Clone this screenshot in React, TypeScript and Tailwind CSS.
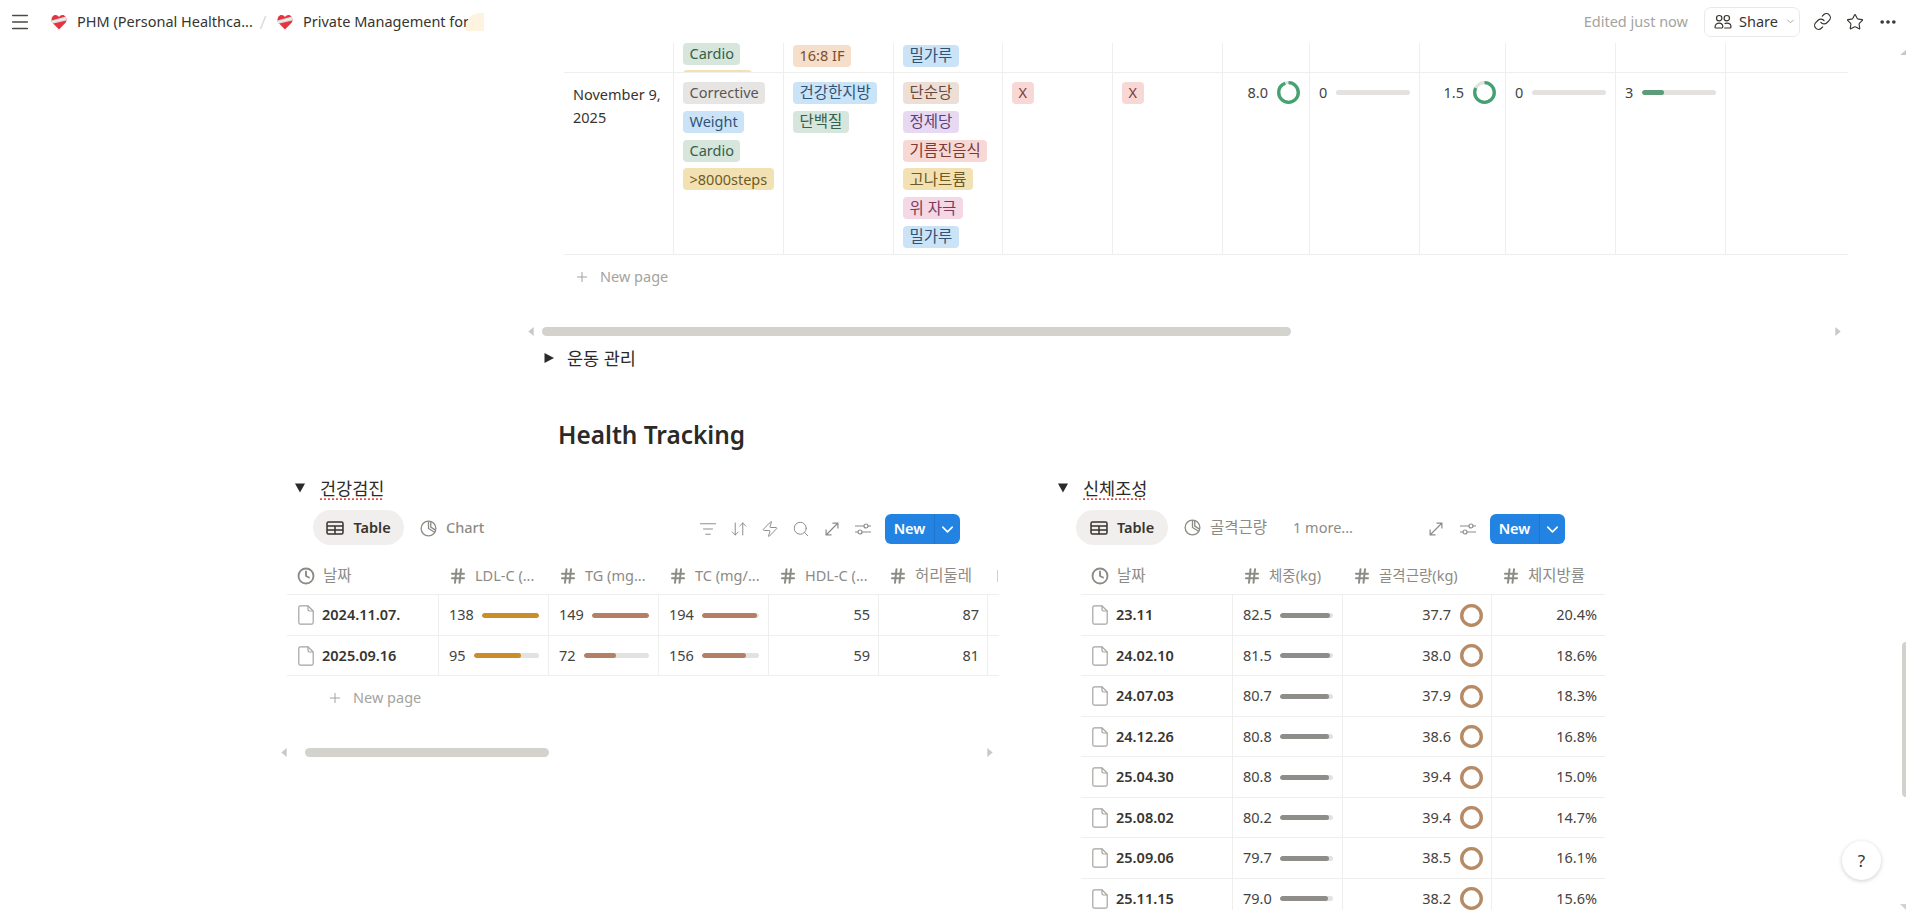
import { ArrowDownUp, ChevronDown, Clock, Ellipsis, Hash, Link, ListFilter, Menu, Plus, Search, Star, Zap } from "lucide-react";
import type { ReactNode } from "react";

const KR = { fontFamily: "'Noto Sans','Noto Sans CJK KR',sans-serif" };

type TagColor = "gray" | "blue" | "green" | "yellow" | "orange" | "brown" | "purple" | "red" | "pink";

const tagClass: Record<TagColor, string> = {
  gray: "bg-[#e6e5e3] text-[#5a5854]",
  blue: "bg-[#cbe3f6] text-[#2f5478]",
  green: "bg-[#d6e6dc] text-[#36604a]",
  yellow: "bg-[#f2e2b3] text-[#6f5a25]",
  orange: "bg-[#f5dfcb] text-[#7a4e2c]",
  brown: "bg-[#eddfd6] text-[#6a4a3c]",
  purple: "bg-[#e8d9f2] text-[#5c3f79]",
  red: "bg-[#f8d8d5] text-[#7c3b36]",
  pink: "bg-[#f5d8e6] text-[#7a3a5a]",
};

// hangul needs a bigger size to get the widths of the reference's font
const onlyKr = (text: string) => /^[가-힣 ]+$/.test(text);

function Tag({ color, children }: { color: TagColor; children: string }) {
  return (
    <span className={`inline-flex h-[22px] w-fit shrink-0 items-center whitespace-nowrap rounded-[4px] px-[6.5px] ${onlyKr(children) ? "text-[15.5px]" : "text-[14.5px]"} ${tagClass[color]}`}>
      {children}
    </span>
  );
}

function Heart() {
  return (
    <svg viewBox="0 0 16 16" className="h-[16px] w-[16px] shrink-0">
      <path d="M8 15.5 L1.4 8.8 C-0.6 6 1 1 4.4 1 C6 1 7.2 1.8 8 3 C8.8 1.8 10 1 11.6 1 C15 1 16.6 6 14.6 8.8 Z" fill="#e5343f" />
      <path d="M0.6 6.4 L14.6 2.6 C15.4 3.8 15.6 5.2 15.4 6.6 L1.4 9.8 C0.8 8.8 0.6 7.6 0.6 6.4 Z" fill="#dcdcdc" />
      <path d="M1 8 L15 4.6" stroke="#f6f6f6" strokeWidth="0.9" />
    </svg>
  );
}

function ShareIcon() {
  return (
    <svg viewBox="0 0 18 16" className="h-[16px] w-[18px] shrink-0" fill="none" stroke="#37352f" strokeWidth="1.2">
      <circle cx="5.2" cy="4.2" r="2.7" />
      <circle cx="12.8" cy="4.2" r="2.7" />
      <path d="M1 13.5 C1 10.6 3 9.2 5.2 9.2 C7.4 9.2 8.6 10.4 8.8 12.4 C8.9 13.6 8.2 14 7.4 14 L2 14 C1.4 14 1 13.9 1 13.5 Z" />
      <path d="M10.2 14 L15.8 14 C16.6 14 17 13.6 17 13 C17 10.6 15 9.2 12.8 9.2 C12 9.2 11.2 9.4 10.6 9.8" />
    </svg>
  );
}

function TableIcon() {
  return (
    <svg viewBox="0 0 18 14" className="h-[14px] w-[18px] shrink-0" fill="none" stroke="#37352f" strokeWidth="1.5">
      <rect x="1" y="1" width="16" height="12" rx="1.5" />
      <path d="M1 5 H17 M1 9 H17 M9 5 V13" />
    </svg>
  );
}

function PieIcon() {
  return (
    <svg viewBox="0 0 18 18" className="h-[17px] w-[17px] shrink-0" fill="none" stroke="#8d8b86" strokeWidth="1.4">
      <circle cx="9" cy="9" r="7.8" />
      <path d="M9 1.4 V9 L15.4 13" />
      <path d="M11.4 2 V7.6 L16 10.4" />
    </svg>
  );
}

function ExpandIcon() {
  return (
    <svg viewBox="0 0 14 14" className="h-[14px] w-[14px] shrink-0" fill="none" stroke="#8d8b86" strokeWidth="1.2">
      <path d="M1.5 12.5 L12.5 1.5 M7.5 1.1 H12.9 V6.5 M1.1 7.5 V12.9 H6.5" />
    </svg>
  );
}

function SlidersIcon() {
  return (
    <svg viewBox="0 0 16 12" className="h-[12px] w-[16px] shrink-0" fill="none" stroke="#8d8b86" strokeWidth="1.2">
      <path d="M0 3 H9 M13 3 H16 M0 9 H3 M7 9 H16" />
      <circle cx="11" cy="3" r="2" />
      <circle cx="5" cy="9" r="2" />
    </svg>
  );
}

function FileIcon() {
  return (
    <svg viewBox="0 0 16 20" className="h-[20px] w-[16px] shrink-0" fill="none" stroke="#a5a39e" strokeWidth="1.2">
      <path d="M2.4 0.8 H10 L15.2 6 V17.4 C15.2 18.5 14.4 19.2 13.4 19.2 H2.4 C1.4 19.2 0.8 18.5 0.8 17.4 V2.6 C0.8 1.5 1.4 0.8 2.4 0.8 Z" />
      <path d="M10 0.8 V4.6 C10 5.5 10.5 6 11.4 6 H15.2" />
    </svg>
  );
}

function Triangle({ open }: { open: boolean }) {
  return (
    <svg viewBox="0 0 10 10" className="h-[10px] w-[10px] shrink-0" fill="#2b2a27">
      {open ? <path d="M0 0.5 H10 L5 9.5 Z" /> : <path d="M0.5 0 L10 5 L0.5 10 Z" />}
    </svg>
  );
}

function Ring({ color, pct }: { color: string; pct: number }) {
  const c = 2 * Math.PI * 9.8;
  return (
    <svg viewBox="0 0 23 23" className="h-[23px] w-[23px] shrink-0 -rotate-90">
      <circle cx="11.5" cy="11.5" r="9.8" fill="none" stroke="#e3e2e0" strokeWidth="3.3" />
      <circle cx="11.5" cy="11.5" r="9.8" fill="none" stroke={color} strokeWidth="3.3" strokeDasharray={`${c * pct} ${c}`} />
    </svg>
  );
}

function Bar({ color, pct }: { color: string; pct: number }) {
  return (
    <div className="h-[5px] min-w-0 flex-1 overflow-hidden rounded-full bg-[#e3e2e0]">
      <div className="h-full rounded-full" style={{ width: `${pct}%`, backgroundColor: color }} />
    </div>
  );
}

function NumBar({ value, color, pct }: { value: string; color: string; pct: number }) {
  return (
    <div className="flex h-full items-center gap-[8px] pl-[10px] pr-[9px] pt-[1px] text-[14.5px] text-[#44433f]">
      <span>{value}</span>
      <Bar color={color} pct={pct} />
    </div>
  );
}

function RightNum({ value }: { value: string }) {
  return <div className="flex h-full items-center justify-end pr-[8px] pt-[1px] text-[14.5px] text-[#44433f]">{value}</div>;
}

function HeadCell({ width, children, clock }: { width: string; children: string; clock?: boolean }) {
  return (
    <div className={`flex shrink-0 items-center overflow-hidden whitespace-nowrap pl-[10px] text-[#8d8b86] ${onlyKr(children) ? "text-[15.5px]" : "text-[14.5px]"} ${width}`}>
      {clock ? (
        <Clock className="mr-[8px] h-[18px] w-[18px] shrink-0" strokeWidth={2.5} />
      ) : (
        <Hash className="mr-[8px] h-[18px] w-[18px] shrink-0" strokeWidth={2.7} />
      )}
      {children}
    </div>
  );
}

function ScrollRow({ lead, thumb, gap }: { lead: string; thumb: string; gap: string }) {
  return (
    <div className="flex h-[9px] items-center">
      <svg viewBox="0 0 6 10" className="h-[9px] w-[6px] shrink-0" fill="#c8c8c5"><path d="M6 0 L0 5 L6 10 Z" /></svg>
      <div className={`h-[9px] shrink-0 rounded-full bg-[#d3d2cd] ${lead} ${thumb}`} />
      <div className={`shrink-0 ${gap}`} />
      <svg viewBox="0 0 6 10" className="h-[9px] w-[6px] shrink-0" fill="#c8c8c5"><path d="M0 0 L6 5 L0 10 Z" /></svg>
    </div>
  );
}

function NewPage({ className }: { className: string }) {
  return (
    <div className={`flex items-center gap-[10px] text-[14.5px] text-[#a5a39e] ${className}`}>
      <Plus className="h-[16px] w-[16px]" strokeWidth={1.5} />
      New page
    </div>
  );
}

function NewButton() {
  return (
    <div className="flex h-[30px] w-[75px] shrink-0 items-center rounded-[6px] bg-[#2383e2] text-white">
      <span className="flex h-full w-[50px] items-center justify-center border-r border-[#1f74c9] text-[14.5px] font-semibold">New</span>
      <ChevronDown className="ml-[3px] h-[19px] w-[19px]" strokeWidth={2} />
    </div>
  );
}

function Pill({ width }: { width: string }) {
  return (
    <div className={`flex h-[35px] shrink-0 items-center justify-center gap-[9px] rounded-full bg-[#f0efed] pt-[1px] text-[14.5px] font-semibold text-[#37352f] ${width}`}>
      <TableIcon />
      Table
    </div>
  );
}

function Toggle({ label }: { label: string }) {
  return (
    <div className="flex h-[24px] items-center gap-[15px]">
      <Triangle open />
      <span className="text-[17.5px] leading-[24px] text-[#2b2a27] underline decoration-[#e0553f] decoration-dotted underline-offset-[4px]">{label}</span>
    </div>
  );
}

const line = "border-r border-[#eeeeed]";

const checkupRows = [
  { date: "2024.11.07.", ldl: "138", ldlPct: 100, tg: "149", tgPct: 100, tc: "194", tcPct: 97, hdl: "55", waist: "87" },
  { date: "2025.09.16", ldl: "95", ldlPct: 73, tg: "72", tgPct: 49, tc: "156", tcPct: 78, hdl: "59", waist: "81" },
];

const bodyRows = [
  { date: "23.11", kg: "82.5", pct: 95, muscle: "37.7", fat: "20.4%" },
  { date: "24.02.10", kg: "81.5", pct: 94, muscle: "38.0", fat: "18.6%" },
  { date: "24.07.03", kg: "80.7", pct: 93, muscle: "37.9", fat: "18.3%" },
  { date: "24.12.26", kg: "80.8", pct: 93, muscle: "38.6", fat: "16.8%" },
  { date: "25.04.30", kg: "80.8", pct: 93, muscle: "39.4", fat: "15.0%" },
  { date: "25.08.02", kg: "80.2", pct: 92, muscle: "39.4", fat: "14.7%" },
  { date: "25.09.06", kg: "79.7", pct: 92, muscle: "38.5", fat: "16.1%" },
  { date: "25.11.15", kg: "79.0", pct: 91, muscle: "38.2", fat: "15.6%" },
];

function NameCell({ width, date }: { width: string; date: string }) {
  return (
    <div className={`flex shrink-0 items-center gap-[8px] pl-[11px] pt-[1px] text-[14.5px] font-semibold text-[#37352f] ${line} ${width}`}>
      <FileIcon />
      {date}
    </div>
  );
}

function RingCell({ width, value, pct }: { width: string; value: string; pct: number }) {
  return (
    <div className={`flex items-start justify-end gap-[9px] pr-[9px] pt-[8px] text-[#44433f] ${line} ${width}`}>
      <span className="leading-[23px]">{value}</span>
      <Ring color="#44a272" pct={pct} />
    </div>
  );
}

function BarCell({ width, value, pct }: { width: string; value: string; pct: number }) {
  return (
    <div className={`pt-[8px] ${line} ${width}`}>
      <div className="flex h-[23px] items-center gap-[9px] px-[9px] text-[#44433f]">
        <span>{value}</span>
        <Bar color="#5d9c78" pct={pct} />
      </div>
    </div>
  );
}

export default function App() {
  return (
    <div style={KR} className="relative h-[910px] w-[1906px] overflow-hidden bg-white text-[#37352f]">
      {/* top bar */}
      <header className="flex h-[43px] items-center text-[14.5px]">
        <Menu className="ml-[9px] h-[22px] w-[22px] text-[#4b4a46]" strokeWidth={1.6} />
        <div className="ml-[20px]"><Heart /></div>
        <span className="ml-[10px] w-[173px] whitespace-nowrap">PHM (Personal Healthca...</span>
        <span className="ml-[9px] w-[8px] text-center text-[19px] font-light leading-[24px] text-[#d3d2cd]">/</span>
        <div className="ml-[10px]"><Heart /></div>
        <span className="ml-[10px] w-[163px] whitespace-nowrap">Private Management for</span>
        <div className="h-[18px] w-[18px] rounded-tl-[14px] bg-[#fdf3e0]" />
        <span className="ml-auto text-[#a5a39e]">Edited just now</span>
        <div className="ml-[16px] flex h-[30px] w-[96px] items-center gap-[7px] rounded-[7px] border border-[#e9e9e7] pl-[9px]">
          <ShareIcon />
          <span>Share</span>
          <ChevronDown className="h-[11px] w-[11px] text-[#a5a39e]" />
        </div>
        <Link className="ml-[13px] h-[19px] w-[19px]" strokeWidth={1.5} />
        <Star className="ml-[14px] h-[18px] w-[18px]" strokeWidth={1.5} />
        <Ellipsis className="ml-[14px] mr-[8px] h-[20px] w-[20px]" strokeWidth={2.4} />
      </header>

      {/* clipped row above the visible one */}
      <section className="ml-[564px] w-[1284px]">
        <div className="flex h-[30px] border-b border-[#eeeeed]">
          <div className={`w-[110px] ${line}`} />
          <div className={`flex w-[110px] flex-col overflow-hidden pl-[9px] ${line}`}>
            <Tag color="green">Cardio</Tag>
            <div className="mt-[5px] h-[22px] w-[69px] shrink-0 rounded-[4px] bg-[#f2e2b3]" />
          </div>
          <div className={`w-[110px] pl-[9px] ${line}`}><Tag color="orange">16:8 IF</Tag></div>
          <div className={`w-[109px] pl-[9px] ${line}`}><Tag color="blue">밀가루</Tag></div>
          <div className={`w-[110px] ${line}`} />
          <div className={`w-[110px] ${line}`} />
          <div className={`w-[87px] ${line}`} />
          <div className={`w-[110px] ${line}`} />
          <div className={`w-[86px] ${line}`} />
          <div className={`w-[110px] ${line}`} />
          <div className={`w-[110px] ${line}`} />
        </div>

        <div className="flex h-[182px] border-b border-[#eeeeed] text-[14.5px]">
          <div className={`w-[110px] pl-[9px] pt-[10px] leading-[22.5px] ${line}`}>November 9,<br />2025</div>
          <div className={`flex w-[110px] flex-col gap-[6.8px] pl-[9px] pt-[9px] ${line}`}>
            <Tag color="gray">Corrective</Tag>
            <Tag color="blue">Weight</Tag>
            <Tag color="green">Cardio</Tag>
            <Tag color="yellow">&gt;8000steps</Tag>
          </div>
          <div className={`flex w-[110px] flex-col gap-[6.8px] pl-[9px] pt-[9px] ${line}`}>
            <Tag color="blue">건강한지방</Tag>
            <Tag color="green">단백질</Tag>
          </div>
          <div className={`flex w-[109px] flex-col gap-[6.8px] pl-[9px] pt-[9px] ${line}`}>
            <Tag color="brown">단순당</Tag>
            <Tag color="purple">정제당</Tag>
            <Tag color="red">기름진음식</Tag>
            <Tag color="yellow">고나트륨</Tag>
            <Tag color="pink">위 자극</Tag>
            <Tag color="blue">밀가루</Tag>
          </div>
          <div className={`w-[110px] pl-[9px] pt-[9px] ${line}`}><Tag color="red">X</Tag></div>
          <div className={`w-[110px] pl-[9px] pt-[9px] ${line}`}><Tag color="red">X</Tag></div>
          <RingCell width="w-[87px]" value="8.0" pct={0.94} />
          <BarCell width="w-[110px]" value="0" pct={0} />
          <RingCell width="w-[86px]" value="1.5" pct={0.82} />
          <BarCell width="w-[110px]" value="0" pct={0} />
          <BarCell width="w-[110px]" value="3" pct={30} />
        </div>
      </section>

      <NewPage className="ml-[574px] mt-[12px] h-[20px]" />

      <div className="ml-[528px] mt-[40px]">
        <ScrollRow lead="ml-[8px]" thumb="w-[749px]" gap="w-[544px]" />
      </div>

      <div className="ml-[544px] mt-[10px] flex h-[24px] items-center gap-[13px]">
        <Triangle open={false} />
        <span className="text-[17.5px] text-[#2b2a27]">운동 관리</span>
      </div>

      <h2 className="ml-[558px] mt-[48px] text-[24.4px] font-semibold leading-[34px] text-[#2b2a27]">Health Tracking</h2>

      <div className="mt-[24px] flex items-start">
        {/* 건강검진 */}
        <section className="ml-[287px] w-[712px]">
          <div className="ml-[8px]"><Toggle label="건강검진" /></div>
          <div className="ml-[26px] mt-[10px] flex h-[35px] w-[647px] items-center">
            <Pill width="w-[91px]" />
            <div className="ml-[16px] flex items-center gap-[9px] pt-[1px] text-[14.5px] font-medium text-[#8d8b86]">
              <PieIcon />
              Chart
            </div>
            <div className="ml-auto mt-[3px] flex items-center gap-[13px] text-[#8d8b86]">
              <ListFilter className="h-[18px] w-[18px]" strokeWidth={1.3} />
              <ArrowDownUp className="h-[18px] w-[18px]" strokeWidth={1.3} />
              <Zap className="h-[18px] w-[18px]" strokeWidth={1.3} />
              <Search className="h-[18px] w-[18px]" strokeWidth={1.3} />
              <div className="flex w-[18px] justify-center"><ExpandIcon /></div>
              <div className="flex w-[18px] justify-center"><SlidersIcon /></div>
            </div>
            <div className="ml-[13px] mt-[3px]"><NewButton /></div>
          </div>

          <div className="flex h-[50px] border-b border-[#eeeeed] pt-[13px]">
            <HeadCell clock width="w-[152px]">날짜</HeadCell>
            <HeadCell width="w-[110px]">LDL-C (...</HeadCell>
            <HeadCell width="w-[110px]">TG (mg...</HeadCell>
            <HeadCell width="w-[110px]">TC (mg/...</HeadCell>
            <HeadCell width="w-[110px]">HDL-C (...</HeadCell>
            <HeadCell width="w-[109px]">허리둘레</HeadCell>
            <div className="ml-[9px] h-[12px] w-[1px] self-center bg-[#d3d2cd]" />
          </div>
          {checkupRows.map((r) => (
            <div key={r.date} className="flex h-[40.5px] border-b border-[#eeeeed]">
              <NameCell width="w-[152px]" date={r.date} />
              <div className={`w-[110px] shrink-0 ${line}`}><NumBar value={r.ldl} color="#c98e28" pct={r.ldlPct} /></div>
              <div className={`w-[110px] shrink-0 ${line}`}><NumBar value={r.tg} color="#b57f65" pct={r.tgPct} /></div>
              <div className={`w-[110px] shrink-0 ${line}`}><NumBar value={r.tc} color="#b57f65" pct={r.tcPct} /></div>
              <div className={`w-[110px] shrink-0 ${line}`}><RightNum value={r.hdl} /></div>
              <div className={`w-[109px] shrink-0 ${line}`}><RightNum value={r.waist} /></div>
            </div>
          ))}
          <NewPage className="ml-[40px] mt-[12px] h-[20px]" />
          <div className="-ml-[6px] mt-[40px]">
            <ScrollRow lead="ml-[18px]" thumb="w-[244px]" gap="w-[438px]" />
          </div>
        </section>

        {/* 신체조성 */}
        <section className="ml-[59px] w-[560px]">
          <Toggle label="신체조성" />
          <div className="ml-[18px] mt-[10px] flex h-[35px] w-[489px] items-center">
            <Pill width="w-[92px]" />
            <div className="ml-[16px] flex items-center gap-[9px] text-[15.5px] text-[#8d8b86]">
              <PieIcon />
              골격근량
            </div>
            <span className="ml-[26px] text-[14.5px] text-[#8d8b86]">1 more...</span>
            <div className="ml-auto mt-[3px] flex items-center gap-[17px]">
              <ExpandIcon />
              <SlidersIcon />
            </div>
            <div className="ml-[14px] mt-[3px]"><NewButton /></div>
          </div>

          <div className="ml-[23px] w-[524px]">
            <div className="flex h-[50px] border-b border-[#eeeeed] pt-[13px]">
              <HeadCell clock width="w-[152px]">날짜</HeadCell>
              <HeadCell width="w-[110px]">체중(kg)</HeadCell>
              <HeadCell width="w-[149px]">골격근량(kg)</HeadCell>
              <HeadCell width="w-[113px]">체지방률</HeadCell>
            </div>
            {bodyRows.map((r) => (
              <div key={r.date} className="flex h-[40.5px] border-b border-[#eeeeed]">
                <NameCell width="w-[152px]" date={r.date} />
                <div className={`w-[110px] shrink-0 ${line}`}><NumBar value={r.kg} color="#8e8d8a" pct={r.pct} /></div>
                <div className={`flex w-[149px] shrink-0 items-center justify-end gap-[9px] pr-[8px] pt-[1px] text-[14.5px] text-[#44433f] ${line}`}>
                  {r.muscle}
                  <Ring color="#b88a63" pct={1} />
                </div>
                <div className="w-[113px] shrink-0"><RightNum value={r.fat} /></div>
              </div>
            ))}
          </div>
        </section>
      </div>

      {/* page scrollbar and help button lie over the page */}
      <svg viewBox="0 0 6 5" className="absolute right-0 top-[50px] h-[5px] w-[6px]" fill="#c8c8c5"><path d="M6 0 V5 H0 Z" /></svg>
      <div className="absolute right-0 top-[642px] h-[155px] w-[4.5px] rounded-l-[4px] bg-[#d3d2cd]" />
      <svg viewBox="0 0 6 6" className="absolute bottom-0 right-0 h-[6px] w-[6px]" fill="#d3d2cd"><path d="M0 0 H6 V6 Z" /></svg>
      <button className="absolute right-[25px] top-[841px] flex h-[39px] w-[39px] items-center justify-center rounded-full bg-white text-[17px] text-[#37352f] shadow-[0_1px_4px_rgba(0,0,0,0.2)]">?</button>
    </div>
  );
}
